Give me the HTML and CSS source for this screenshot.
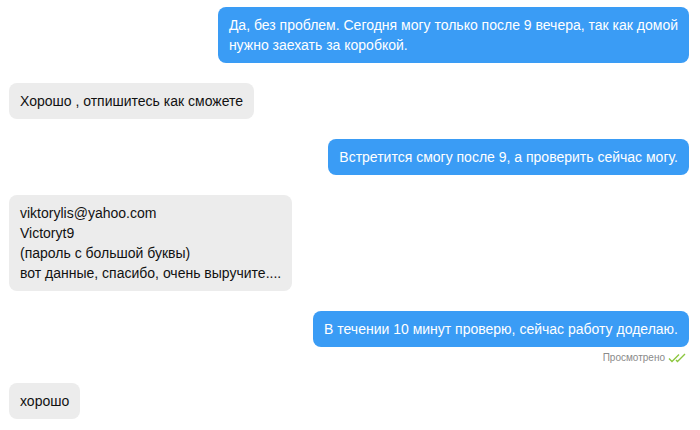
FILE: index.html
```html
<!DOCTYPE html>
<html lang="ru">
<head>
<meta charset="utf-8">
<link rel="stylesheet" href="styles.css">
</head>
<body>
<div class="chat">
  <div class="msg out"><div class="bubble">Да, без проблем. Сегодня могу только после 9 вечера, так как домой<br>нужно заехать за коробкой.</div></div>
  <div class="msg in"><div class="bubble">Хорошо , отпишитесь как сможете</div></div>
  <div class="msg out"><div class="bubble">Встретится смогу после 9, а проверить сейчас могу.</div></div>
  <div class="msg in"><div class="bubble">viktorylis@yahoo.com<br>Victoryt9<br>(пароль с большой буквы)<br>вот данные, спасибо, очень выручите....</div></div>
  <div class="msg out"><div class="bubble">В течении 10 минут проверю, сейчас работу доделаю.</div>
    <div class="status">Просмотрено <svg class="ticks" width="19" height="10" viewBox="0 0 19 10"><path d="M1 5.5 L4 8.5 L11 1.5 M8 7 L9.5 8.5 L17 1" fill="none" stroke="#8cc63f" stroke-width="1.4"/></svg></div>
  </div>
  <div class="msg in last"><div class="bubble">хорошо</div></div>
</div>
</body>
</html>
```

FILE: styles.css
```css
html, body {
  margin: 0;
  padding: 0;
  background: #ffffff;
}
body {
  font-family: "Liberation Sans", Arial, Helvetica, sans-serif;
  font-size: 14px;
  line-height: 20px;
}
.chat {
  display: flex;
  flex-direction: column;
  gap: 20px;
  padding: 7px 11px 0 9px;
}
.msg {
  display: flex;
  flex-direction: column;
}
.msg.out { align-items: flex-end; }
.msg.in { align-items: flex-start; }
.bubble {
  padding: 8px 11px;
  border-radius: 8px;
}
.out .bubble {
  background: #3a9cf5;
  color: #ffffff;
}
.in .bubble {
  background: #ececec;
  color: #111111;
}
.msg.last { margin-top: -2px; }
.status {
  display: flex;
  align-items: center;
  gap: 3px;
  margin-top: 4px;
  margin-right: 2px;
  font-size: 10px;
  line-height: 14px;
  color: #8a8a8a;
}
.ticks { display: block; }
```
